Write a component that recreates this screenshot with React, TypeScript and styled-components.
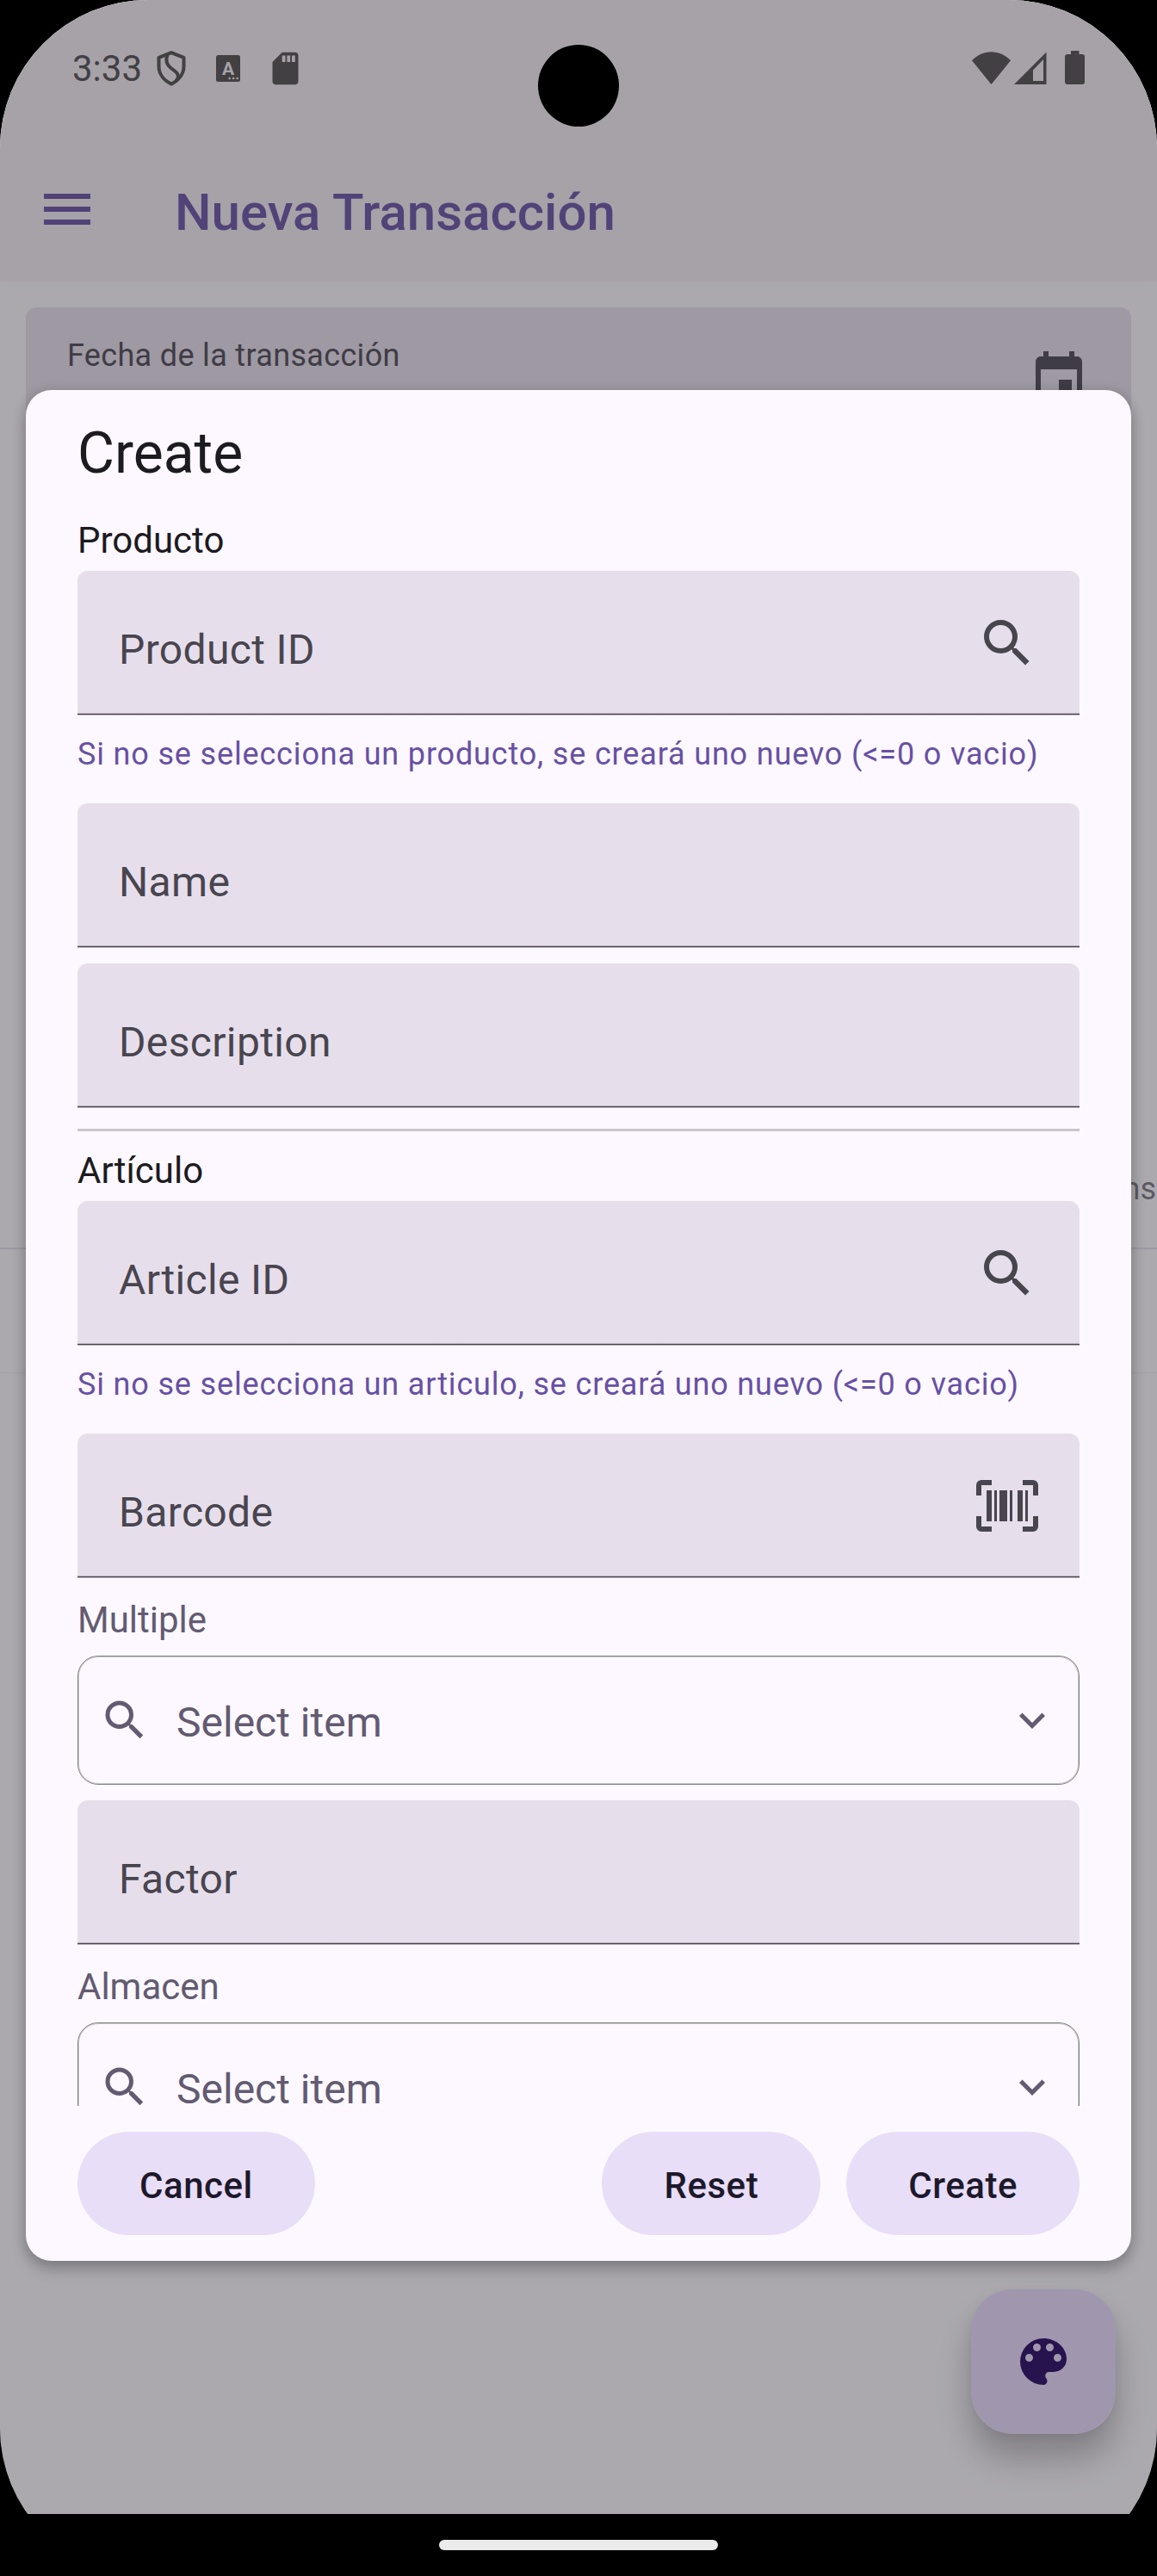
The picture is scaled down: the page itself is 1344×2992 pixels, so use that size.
import React from "react";
import styled, { createGlobalStyle } from "styled-components";

const color = {
  surface: "#fcfbfe",
  appBar: "#f4eef4",
  dialog: "#fdf8ff",
  fieldFill: "#e6dfeb",
  primary: "#6750a4",
  onSurface: "#1c1b1f",
  onSurfaceVariant: "#49454f",
  secondary: "#625b71",
  tonal: "#e8def8",
  onTonal: "#1d192b",
  outlineVariant: "#cac4d0",
  status: "#4e4b4b",
};

const icons = {
  menu: "M3,6H21V8H3V6M3,11H21V13H3V11M3,16H21V18H3V16Z",
  event:
    "M17 12h-5v5h5v-5zM16 1v2H8V1H6v2H5c-1.11 0-1.99.9-1.99 2L3 19c0 1.1.89 2 2 2h14c1.1 0 2-.9 2-2V5c0-1.1-.9-2-2-2h-1V1h-2zm3 18H5V8h14v11z",
  magnify:
    "M9.5,3A6.5,6.5 0 0,1 16,9.5C16,11.11 15.41,12.59 14.44,13.73L14.71,14H15.5L20.5,19L19,20.5L14,15.5V14.71L13.73,14.44C12.59,15.41 11.11,16 9.5,16A6.5,6.5 0 0,1 3,9.5A6.5,6.5 0 0,1 9.5,3M9.5,5C7,5 5,7 5,9.5C5,12 7,14 9.5,14C12,14 14,12 14,9.5C14,7 12,5 9.5,5Z",
  barcodeScan:
    "M4,6H6V18H4V6M7,6H8V18H7V6M9,6H12V18H9V6M13,6H14V18H13V6M16,6H18V18H16V6M19,6H20V18H19V6M2,4V8H0V4A2,2 0 0,1 2,2H6V4H2M22,2A2,2 0 0,1 24,4V8H22V4H18V2H22M2,16V20H6V22H2A2,2 0 0,1 0,20V16H2M22,20V16H24V20A2,2 0 0,1 22,22H18V20H22Z",
  chevronDown: "M7.41,8.58L12,13.17L16.59,8.58L18,10L12,16L6,10L7.41,8.58Z",
  palette:
    "M17.5,12A1.5,1.5 0 0,1 16,10.5A1.5,1.5 0 0,1 17.5,9A1.5,1.5 0 0,1 19,10.5A1.5,1.5 0 0,1 17.5,12M14.5,8A1.5,1.5 0 0,1 13,6.5A1.5,1.5 0 0,1 14.5,5A1.5,1.5 0 0,1 16,6.5A1.5,1.5 0 0,1 14.5,8M9.5,8A1.5,1.5 0 0,1 8,6.5A1.5,1.5 0 0,1 9.5,5A1.5,1.5 0 0,1 11,6.5A1.5,1.5 0 0,1 9.5,8M6.5,12A1.5,1.5 0 0,1 5,10.5A1.5,1.5 0 0,1 6.5,9A1.5,1.5 0 0,1 8,10.5A1.5,1.5 0 0,1 6.5,12M12,3A9,9 0 0,0 3,12A9,9 0 0,0 12,21A1.5,1.5 0 0,0 13.5,19.5C13.5,19.11 13.35,18.76 13.11,18.5C12.88,18.23 12.73,17.88 12.73,17.5A1.5,1.5 0 0,1 14.23,16H16A5,5 0 0,0 21,11C21,6.58 16.97,3 12,3Z",
  sdCard:
    "M18 2h-8L4.02 8 4 20c0 1.1.9 2 2 2h12c1.1 0 2-.9 2-2V4c0-1.1-.9-2-2-2zm-6 6h-2V4h2v4zm3 0h-2V4h2v4zm3 0h-2V4h2v4z",
};

const IconSvg = styled.svg`
  flex: none;
`;

const Icon = ({ name, size, fill }: { name: keyof typeof icons; size: number; fill: string }) => (
  <IconSvg width={size} height={size} viewBox="0 0 24 24" fill={fill}>
    <path d={icons[name]} />
  </IconSvg>
);

const GlobalStyle = createGlobalStyle`
  *, *::before, *::after { box-sizing: border-box; }
  body { margin: 0; background: #000; font-family: Roboto, "Noto Sans", sans-serif; }
  svg { display: block; }
`;

/* ---------- device ---------- */

const Device = styled.div`
  position: relative;
  width: 1344px;
  height: 2992px;
  overflow: hidden;
  border-radius: 172px;
  background: #000;
`;

const AppScreen = styled.div`
  position: relative;
  display: flex;
  flex-direction: column;
  height: 2920px;
  overflow: hidden;
  background: ${color.surface};
`;

const Scrim = styled.div`
  position: absolute;
  inset: 0;
  background: rgba(50, 47, 55, 0.4);
`;

const Camera = styled.div`
  position: absolute;
  top: 52px;
  left: 625px;
  width: 94px;
  height: 95px;
  border-radius: 50%;
  background: #000;
`;

const NavigationBar = styled.div`
  display: flex;
  justify-content: center;
  height: 72px;
  padding-top: 30px;
  background: #000;
`;

const Handle = styled.div`
  width: 324px;
  height: 12px;
  border-radius: 6px;
  background: #ebebeb;
`;

/* ---------- status bar and app bar ---------- */

const Header = styled.header`
  background: ${color.appBar};
  box-shadow: 0 3px 18px rgba(0, 0, 0, 0.02);
`;

const StatusBar = styled.div`
  display: flex;
  justify-content: space-between;
  align-items: center;
  height: 135px;
  padding: 24px 84px 0;
`;

const StatusGroup = styled.div<{ $gap?: number; $lift?: number }>`
  display: flex;
  align-items: center;
  gap: ${(p) => p.$gap ?? 0}px;
  margin-bottom: ${(p) => p.$lift ?? 0}px;
`;

const Notifications = styled(StatusGroup)`
  margin-left: 17px;
`;

const SdCardSlot = styled.span`
  margin-left: -5.5px;
`;

const BatterySlot = styled.span`
  margin-left: 17px;
`;

const Clock = styled.span`
  font-size: 42px;
  line-height: 49px;
  color: ${color.status};
`;

const AppBar = styled.div`
  display: flex;
  align-items: center;
  gap: 89px;
  height: 192px;
  padding: 24px 42px 0;
`;

const AppTitle = styled.h1`
  margin: 7px 0 0;
  font-size: 60px;
  font-weight: 500;
  line-height: 83px;
  color: ${color.primary};
`;

/* ---------- page under the dialog ---------- */

const Page = styled.main`
  display: flex;
  flex-direction: column;
  padding-top: 30px;
`;

const DateField = styled.div`
  display: flex;
  justify-content: space-between;
  height: 168px;
  margin: 0 30px;
  padding: 26px 48px 0;
  border-radius: 12px 12px 0 0;
  background: #e7e0ec;
`;

const DateLabel = styled.span`
  font-size: 36px;
  line-height: 60px;
  letter-spacing: 0.33px;
  color: ${color.onSurfaceVariant};
`;

const DateIcon = styled.span`
  margin: 22px 0 0;
`;

const Table = styled.div`
  margin-top: 782px;
`;

const TableHead = styled.div`
  display: flex;
  justify-content: flex-end;
  height: 144px;
  padding: 44px 1px 0 0;
  border-bottom: 2px solid #e7e0ec;
  font-size: 36px;
  line-height: 60px;
  color: rgba(28, 27, 31, 0.6);
`;

const TableFoot = styled.div`
  height: 144px;
  border-bottom: 1px solid #efe9f2;
`;

const Fab = styled.button`
  position: absolute;
  right: 48px;
  bottom: 93px;
  display: flex;
  align-items: center;
  justify-content: center;
  width: 168px;
  height: 168px;
  padding: 0;
  border: 0;
  border-radius: 48px;
  background: #eaddff;
  box-shadow: 0 28px 42px rgba(0, 0, 0, 0.28), 0 3px 12px rgba(0, 0, 0, 0.06);
`;

/* ---------- dialog ---------- */

const Dialog = styled.section`
  position: absolute;
  top: 453px;
  left: 30px;
  right: 30px;
  display: flex;
  flex-direction: column;
  height: 2173px;
  padding: 32px 60px 30px;
  border-radius: 30px;
  background: ${color.dialog};
  box-shadow: 0 10px 18px rgba(0, 0, 0, 0.2), 0 2px 16px rgba(0, 0, 0, 0.14);
`;

const DialogTitle = styled.h2`
  margin: 0 0 30px;
  font-size: 66px;
  font-weight: 400;
  line-height: 83px;
  color: ${color.onSurface};
`;

const Form = styled.div`
  flex: 1;
  min-height: 0;
  overflow: hidden;
`;

const SectionLabel = styled.div`
  margin-bottom: 6px;
  font-size: 42px;
  line-height: 59px;
  color: ${color.onSurface};
`;

const SelectLabel = styled.div`
  margin: 19px 0 12px;
  font-size: 42px;
  line-height: 59px;
  color: ${color.secondary};
`;

const Field = styled.div<{ $spaced?: boolean }>`
  display: flex;
  justify-content: space-between;
  height: 168px;
  margin-top: ${(p) => (p.$spaced ? 18 : 0)}px;
  padding: 48px 48px 0;
  border-radius: 12px 12px 0 0;
  background: linear-gradient(
      to bottom,
      rgba(73, 69, 79, 0.28) 0 1px,
      ${color.onSurfaceVariant} 1px 2px,
      rgba(73, 69, 79, 0.28) 2px 3px
    )
    bottom / 100% 3px no-repeat ${color.fieldFill};
`;

const FieldText = styled.span`
  margin-top: 8px;
  font-size: 48px;
  line-height: 71px;
  letter-spacing: 0.35px;
  color: ${color.onSurfaceVariant};
`;

const Helper = styled.p`
  margin: 15px 0 27px;
  font-size: 36px;
  line-height: 60px;
  letter-spacing: 0.84px;
  white-space: nowrap;
  color: ${color.primary};
`;

const Divider = styled.hr`
  height: 3px;
  margin: 24px 0 16px;
  border: 0;
  background: ${color.outlineVariant};
`;

const SelectBox = styled.div`
  display: flex;
  align-items: center;
  height: 150px;
  padding: 0 24px;
  border: 1px solid #808080;
  border-radius: 24px;
  box-shadow: inset 0 0 0 1px rgba(128, 128, 128, 0.4);
`;

const SelectText = styled.span`
  flex: 1;
  margin: 5px 0 0 30px;
  font-size: 48px;
  line-height: 71px;
  color: ${color.secondary};
`;

const Actions = styled.div`
  display: flex;
  gap: 30px;
  margin-top: 30px;
`;

const ActionButton = styled.button<{ $first?: boolean }>`
  height: 120px;
  margin: 0 ${(p) => (p.$first ? "auto" : "0")} 0 0;
  padding: 5px 72px 0;
  border: 0;
  border-radius: 60px;
  background: ${color.tonal};
  color: ${color.onTonal};
  font: 500 42px / 59px Roboto, "Noto Sans", sans-serif;
  letter-spacing: 0.55px;
`;

/* ---------- status icons ---------- */

const ShieldIcon = () => (
  <svg width="34" height="41" viewBox="0 0 34 41" fill="none" stroke={color.status} strokeWidth="4" strokeLinejoin="round">
    <path d="M17 2.2L31.5 7.8V18C31.5 27 25.5 34.5 17 38.6C8.5 34.5 2.5 27 2.5 18V7.8Z" />
    <path d="M12.5 4.5C10 11 11.5 16 16.500 20C22.500 24.500 28.500 28 22.500 35" />
  </svg>
);

const KeyboardIcon = () => (
  <svg width="28" height="31" viewBox="0 0 28 31">
    <rect width="28" height="31" rx="2.5" fill={color.status} />
    <text x="14" y="22.5" textAnchor="middle" fontFamily="Roboto, sans-serif" fontWeight="700" fontSize="21" fill={color.appBar}>
      A
    </text>
    <g fill={color.appBar}>
      <circle cx="15.7" cy="27" r="1.3" />
      <circle cx="20.2" cy="27" r="1.3" />
      <circle cx="24.7" cy="27" r="1.3" />
    </g>
  </svg>
);

const WifiIcon = () => (
  <svg width="45" height="38" viewBox="0 0 45 38" fill={color.status}>
    <path d="M22.5 38L0 10.3C6.3 3.9 14.2 0.3 22.5 0.3S38.7 3.9 45 10.3Z" />
  </svg>
);

const SignalIcon = () => (
  <svg width="38" height="38" viewBox="0 0 38 38" fill={color.status}>
    <path fillRule="evenodd" d="M0 38L37.5 0.5V38ZM22 21.5V34H34V9Z" />
  </svg>
);

const BatteryIcon = () => (
  <svg width="23" height="39" viewBox="0 0 23 39" fill={color.status}>
    <rect x="7" width="9.5" height="8" />
    <rect y="4" width="23" height="35" rx="3" />
  </svg>
);

/* ---------- form controls ---------- */

const Select = ({ label }: { label: string }) => (
  <>
    <SelectLabel>{label}</SelectLabel>
    <SelectBox>
      <Icon name="magnify" size={60} fill={color.secondary} />
      <SelectText>Select item</SelectText>
      <Icon name="chevronDown" size={60} fill={color.secondary} />
    </SelectBox>
  </>
);

const TextField = ({ label, icon, spaced }: { label: string; icon?: keyof typeof icons; spaced?: boolean }) => (
  <Field $spaced={spaced}>
    <FieldText>{label}</FieldText>
    {icon && <Icon name={icon} size={72} fill={color.onSurfaceVariant} />}
  </Field>
);

export default function App() {
  return (
    <>
      <GlobalStyle />
      <Device>
        <AppScreen>
          <Header>
            <StatusBar>
              <StatusGroup>
                <Clock>3:33</Clock>
                <Notifications $gap={35}>
                  <ShieldIcon />
                  <KeyboardIcon />
                  <SdCardSlot>
                    <Icon name="sdCard" size={45} fill={color.status} />
                  </SdCardSlot>
                </Notifications>
              </StatusGroup>
              <StatusGroup $gap={4} $lift={2}>
                <WifiIcon />
                <SignalIcon />
                <BatterySlot>
                  <BatteryIcon />
                </BatterySlot>
              </StatusGroup>
            </StatusBar>
            <AppBar>
              <Icon name="menu" size={72} fill={color.primary} />
              <AppTitle>Nueva Transacción</AppTitle>
            </AppBar>
          </Header>
          <Page>
            <DateField>
              <DateLabel>Fecha de la transacción</DateLabel>
              <DateIcon>
                <Icon name="event" size={72} fill={color.onSurfaceVariant} />
              </DateIcon>
            </DateField>
            <Table>
              <TableHead>ns</TableHead>
              <TableFoot />
            </Table>
          </Page>
          <Fab>
            <Icon name="palette" size={72} fill="#21005d" />
          </Fab>
          <Scrim />
          <Dialog>
            <DialogTitle>Create</DialogTitle>
            <Form>
              <SectionLabel>Producto</SectionLabel>
              <TextField label="Product ID" icon="magnify" />
              <Helper>Si no se selecciona un producto, se creará uno nuevo (&lt;=0 o vacio)</Helper>
              <TextField label="Name" />
              <TextField label="Description" spaced />
              <Divider />
              <SectionLabel>Artículo</SectionLabel>
              <TextField label="Article ID" icon="magnify" />
              <Helper>Si no se selecciona un articulo, se creará uno nuevo (&lt;=0 o vacio)</Helper>
              <TextField label="Barcode" icon="barcodeScan" />
              <Select label="Multiple" />
              <TextField label="Factor" spaced />
              <Select label="Almacen" />
            </Form>
            <Actions>
              <ActionButton $first>Cancel</ActionButton>
              <ActionButton>Reset</ActionButton>
              <ActionButton>Create</ActionButton>
            </Actions>
          </Dialog>
        </AppScreen>
        <NavigationBar>
          <Handle />
        </NavigationBar>
        <Camera />
      </Device>
    </>
  );
}
